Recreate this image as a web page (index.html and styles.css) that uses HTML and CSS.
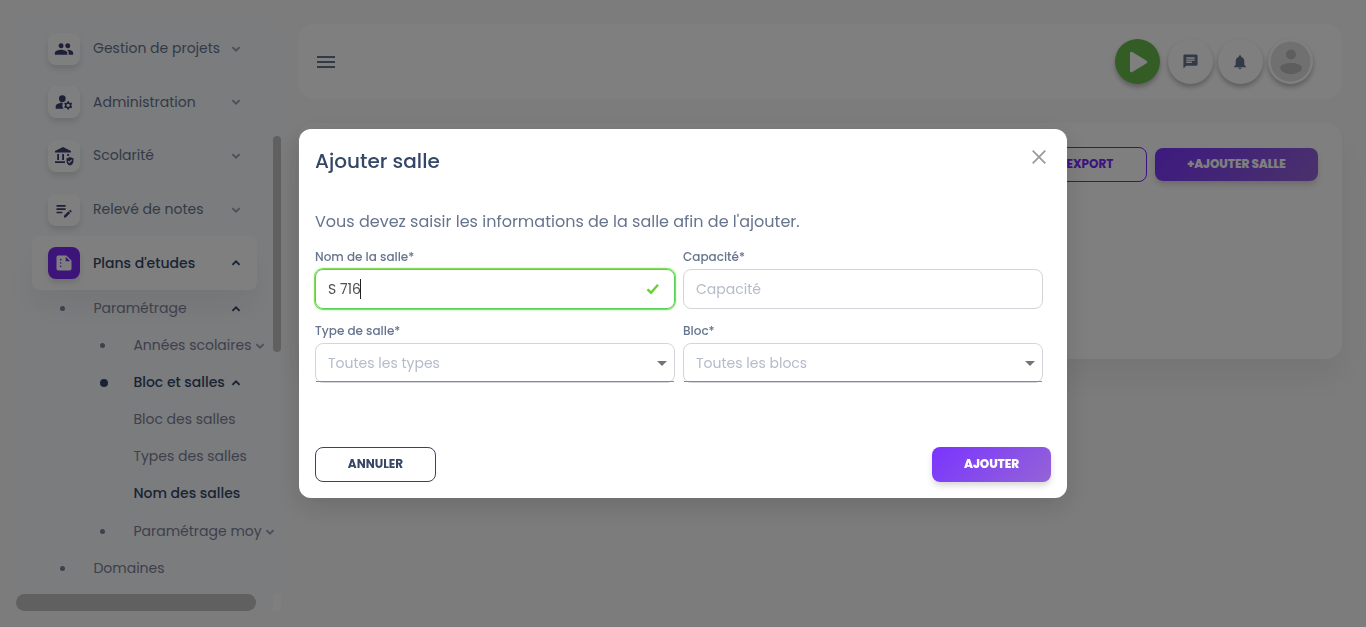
FILE: index.html
```
<!DOCTYPE html>
<html lang="fr">
<head>
<meta charset="utf-8">
<title>Ajouter salle</title>
<link rel="stylesheet" href="styles.css">
</head>
<body>
<svg class="defs" width="0" height="0">
  <symbol id="chev" viewBox="0 0 10 10"><path d="M1.4 3.1 5 6.7 8.6 3.1" fill="none" stroke="currentColor" stroke-width="1.9"/></symbol>
  <symbol id="caret" viewBox="0 0 10 5"><path d="M0 0h10L5 5z" fill="currentColor"/></symbol>
</svg>
<div class="page">
  <aside class="sidebar">
    <nav class="menu">
      <a class="item"><span class="tile"><svg width="20" height="20" viewBox="0 0 24 24"><path d="M16.5 11a3 3 0 1 0-.01-6 3 3 0 0 0 .01 6zm-8 0a3 3 0 1 0-.01-6 3 3 0 0 0 .01 6zm0 2C6 13 1 14.2 1 16.600V19h15v-2.400C16 14.200 11 13 8.500 13zm8 0-1 .06c1.300.9 2.200 2 2.200 3.540V19H23v-2.400c0-2.400-4-3.600-6.500-3.600z"/></svg></span><span class="label">Gestion de projets</span><svg class="arrow"><use href="#chev"/></svg></a>
      <a class="item"><span class="tile"><svg width="20" height="20" viewBox="0 0 24 24"><circle cx="10" cy="8" r="4"/><path d="M10.670 13.020C10.450 13.010 10.230 13 10 13c-2.420 0-4.680.67-6.610 1.820-.88.520-1.390 1.500-1.390 2.530V20h9.260a6.960 6.960 0 0 1-.59-6.980zM20.750 16c0-.22-.03-.42-.06-.63l1.140-1.010-1-1.730-1.450.49c-.32-.27-.68-.48-1.080-.63L18 11h-2l-.3 1.490c-.4.150-.76.360-1.080.63l-1.450-.49-1 1.730 1.140 1.010c-.03.210-.06.410-.06.63s.03.420.06.630l-1.140 1.010 1 1.730 1.450-.49c.32.270.68.480 1.080.63L16 21h2l.3-1.490c.4-.15.760-.36 1.080-.63l1.450.49 1-1.730-1.140-1.010c.03-.21.060-.41.060-.63zM17 18a2 2 0 1 1 0-4 2 2 0 0 1 0 4z"/></svg></span><span class="label">Administration</span><svg class="arrow"><use href="#chev"/></svg></a>
      <a class="item"><span class="tile"><svg width="20" height="20" viewBox="0 0 20 20"><path d="M9 1 1 5v1.500h16V5zM3.200 8h1.800v6H3.200zM8.200 8H10v6H8.200zM13.300 8h1.800v2h-1.800zM1 15.300h10v1.800H1z"/><path fill-rule="evenodd" d="M16 11l-3.500 1.400V15c0 2.200 1.500 4 3.500 4.600 2-.6 3.500-2.400 3.500-4.600v-2.600zm-.6 6.200-1.700-1.700.8-.8.900.9 2.100-2.100.8.8z"/></svg></span><span class="label">Scolarité</span><svg class="arrow"><use href="#chev"/></svg></a>
      <a class="item"><span class="tile"><svg width="20" height="20" viewBox="0 0 24 24"><path d="M3 10h11v2H3zM3 6h11v2H3zM3 14h7v2H3zM18.010 12.870l.71-.71a1 1 0 0 1 1.410 0l.71.71a1 1 0 0 1 0 1.410l-.71.710zM17.300 13.580l-5.300 5.300V21h2.120l5.300-5.300z"/></svg></span><span class="label">Relevé de notes</span><svg class="arrow"><use href="#chev"/></svg></a>
      <a class="item active"><span class="tile"><svg width="20" height="20" viewBox="0 0 24 24"><path fill-rule="evenodd" d="M15 3H5a2 2 0 0 0-2 2v14c0 1.100.9 2 2 2h14a2 2 0 0 0 2-2V9zM8 17a1 1 0 1 1 0-2 1 1 0 0 1 0 2zm0-4a1 1 0 1 1 0-2 1 1 0 0 1 0 2zm0-4a1 1 0 1 1 0-2 1 1 0 0 1 0 2zm6 1V4.500l5.500 5.500z"/></svg></span><span class="label">Plans d'etudes</span><svg class="arrow up"><use href="#chev"/></svg></a>
    </nav>
    <div class="sub">
      <a class="row"><i class="dot"></i><span class="label">Paramétrage</span><svg class="arrow up"><use href="#chev"/></svg></a>
      <a class="row deep"><i class="dot"></i><span class="label">Années scolaires</span><svg class="arrow near"><use href="#chev"/></svg></a>
      <a class="row deep on"><i class="dot"></i><span class="label">Bloc et salles</span><svg class="arrow up near wide"><use href="#chev"/></svg></a>
      <a class="row deep"><span class="label">Bloc des salles</span></a>
      <a class="row deep"><span class="label">Types des salles</span></a>
      <a class="row deep on"><span class="label">Nom des salles</span></a>
      <a class="row deep last"><i class="dot"></i><span class="label">Paramétrage moy</span><svg class="arrow near"><use href="#chev"/></svg></a>
      <a class="row"><i class="dot"></i><span class="label">Domaines</span></a>
    </div>
    <i class="bar-v"></i><i class="bar-h"></i><i class="bar-c"></i>
  </aside>
  <main class="main">
    <header class="card topbar">
      <span class="burger"><i></i><i></i><i></i></span>
      <div class="actions">
        <span class="round play"><svg width="45" height="45" viewBox="0 0 45 45"><path d="M16.500 14.300v17.400l14.300-8.700z" fill="#fff" stroke="#fff" stroke-width="3" stroke-linejoin="round"/></svg></span>
        <span class="round"><svg class="nudge" width="17" height="17" viewBox="0 0 24 24"><path d="M20 2H4a2 2 0 0 0-2 2v18l4-4h14a2 2 0 0 0 2-2V4a2 2 0 0 0-2-2zM6 9h12v2H6zm8 5H6v-2h8zm4-6H6V6h12z"/></svg></span>
        <span class="round"><svg class="nudge" width="16" height="16" viewBox="0 0 24 24"><path d="M12 23a2.200 2.200 0 0 0 2.200-2.200H9.800A2.200 2.200 0 0 0 12 23zm6.500-6.500V11c0-3.400-1.800-6.200-4.900-7V3.300a1.600 1.600 0 0 0-3.200 0V4c-3.100.8-4.900 3.600-4.900 7v5.500l-2.300 2v1.200h17.600v-1.200z"/></svg></span>
        <span class="round avatar"><svg width="41" height="41" viewBox="0 0 41 41"><circle cx="20.500" cy="20.500" r="20" fill="#e0e0e0"/><circle cx="21" cy="13.500" r="5" fill="#bdbdbd"/><path d="M10 27c0-3 5-5 11-5s11 2 11 5c-1 3.500-5 6-11 6s-10-2.500-11-6z" fill="#bdbdbd"/></svg></span>
      </div>
    </header>
    <section class="card content">
      <button class="btn export">EXPORT</button>
      <button class="btn grad add">+AJOUTER SALLE</button>
    </section>
  </main>
</div>
<div class="backdrop">
  <div class="modal">
    <div class="head"><h2>Ajouter salle</h2><svg class="close" width="14" height="14" viewBox="0 0 14 14"><path d="M.7.7l12.600 12.600M13.300.7.7 13.300"/></svg></div>
    <p class="intro">Vous devez saisir les informations de la salle afin de l'ajouter.</p>
    <div class="grid">
      <div class="field"><label>Nom de la salle*</label><div class="input valid"><span>S 716</span><i class="cursor"></i><svg class="check" width="14" height="12" viewBox="0 0 14 12"><path d="M1.500 6.300 5 9.700 12 1.700" fill="none" stroke="#66d432" stroke-width="2.500"/></svg></div></div>
      <div class="field"><label>Capacité*</label><div class="input">Capacité</div></div>
      <div class="field"><label>Type de salle*</label><div class="input select">Toutes les types<svg class="caret"><use href="#caret"/></svg></div></div>
      <div class="field"><label>Bloc*</label><div class="input select">Toutes les blocs<svg class="caret"><use href="#caret"/></svg></div></div>
    </div>
    <div class="foot"><button class="btn cancel">ANNULER</button><button class="btn grad ok">AJOUTER</button></div>
  </div>
</div>
</body>
</html>
```
FILE: styles.css
```
* { box-sizing: border-box; }
body { margin: 0; height: 627px; overflow: hidden; background: #f8f8f8; font-family: Poppins, Inter, "Open Sans", sans-serif; font-size: 14px; color: #67748e; }
h2, p { margin: 0; }
.defs { position: absolute; }
.page { display: flex; height: 627px; }

.sidebar { position: relative; flex: none; width: 265px; height: 595px; margin: 16px 17px 0 16px; padding-top: 5.900px; background: #f7f9fb; border-radius: 16px; }
.item { display: flex; align-items: center; width: 225px; height: 53.650px; margin-left: 16px; padding: 0 16px; border-radius: 8px; }
.item.active { background: #fff; box-shadow: 0 20px 27px rgba(0, 0, 0, .05); color: #344767; font-weight: 500; }
.tile { flex: none; display: flex; align-items: center; justify-content: center; width: 32px; height: 32px; margin-right: 13px; border-radius: 8px; background: #fff; box-shadow: 0 4px 6px rgba(0, 0, 0, .12); }
.tile svg { fill: #3a416f; }
.active .tile { background: #7928f5; }
.active .tile svg { fill: #fff; }
.label { white-space: nowrap; }
.arrow { flex: none; width: 10px; height: 10px; margin-left: auto; color: #9a9eb0; }
.arrow.up { transform: rotate(180deg); color: #344767; }
.row { display: flex; align-items: center; height: 37px; padding-left: 44px; }
.row.last { margin-top: 1px; }
.row .label { color: #7b809a; }
.row .dot { width: 5px; height: 5px; margin-right: 28.400px; border-radius: 50%; background: #7b809a; }
.row:not(.deep) .arrow { margin-right: 40.500px; }
.row.deep { padding-left: 84px; }
.row.deep .label:first-child { margin-left: 33.400px; }
.row.on .label { color: #344767; font-weight: 500; }
.row.on .dot { width: 8px; height: 8px; margin: 0 25.400px 0 0; background: #344767; }
.arrow.near { margin-left: 3.500px; }
.arrow.wide { margin-left: 6px; }
.bar-v, .bar-h, .bar-c { position: absolute; background: #c1c1c1; }
.bar-v { left: 257px; top: 120px; width: 8px; height: 216px; border-radius: 4px; }
.bar-h { left: 0; bottom: 0; width: 240px; height: 17px; border-radius: 9px; }
.bar-c { right: 0; bottom: 0; width: 8px; height: 17px; background: #fff; }

.main { flex: 1; padding: 24px 24px 0 0; }
.card { background: #fff; border-radius: 16px; }
.topbar { display: flex; align-items: center; justify-content: space-between; height: 75px; padding: 0 29px 0 19px; }
.burger { display: grid; gap: 3px; width: 18px; }
.burger i { height: 2px; background: #67748e; }
.actions { display: flex; gap: 5px; }
.round { display: flex; align-items: center; justify-content: center; width: 45px; height: 45px; border-radius: 50%; background: #fff; box-shadow: 0 3px 5px rgba(0, 0, 0, .28); }
.round svg { fill: #67748e; }
.nudge { margin-right: 1px; }
.round.play { margin-right: 3px; background: #66bb4a; }
.content { display: flex; justify-content: flex-end; align-items: flex-start; gap: 8px; height: 236px; margin-top: 24px; padding: 24px; box-shadow: 0 20px 27px rgba(0, 0, 0, .05); }

.btn { padding: 0 0 2px; border: 0; border-radius: 8px; font: 700 12px Poppins, Inter, sans-serif; text-align: center; }
.grad { color: #fff; background: linear-gradient(135deg, #7a34ff, #9464d6); box-shadow: 0 4px 7px -1px rgba(0, 0, 0, .18); font-weight: 800; letter-spacing: -.1px; }
.export { width: 114px; height: 35px; border: 1px solid #7928ff; background: #fff; color: #7928ff; }
.add { width: 163px; height: 33px; margin-top: 1px; }

.backdrop { position: fixed; inset: 0; padding: 129px 0 0 299px; background: rgba(0, 0, 0, .5); }
.modal { width: 768px; height: 369px; padding: 16px; border-radius: 12px; background: #fff; box-shadow: 0 8px 26px rgba(20, 20, 20, .15); }
.head { display: flex; justify-content: space-between; height: 60px; }
.head h2 { font-size: 20px; line-height: 32px; font-weight: 500; color: #344767; }
.close { margin: 5px 5px 0 0; fill: none; stroke: #999; stroke-width: 1.7; }
.intro { height: 44px; line-height: 34px; font-size: 16px; white-space: nowrap; }
.grid { display: grid; grid-template-columns: 360px 360px; column-gap: 8px; }
.field { height: 74px; }
label { display: block; height: 20px; line-height: 16px; font-size: 12px; font-weight: 500; }
.input { position: relative; display: flex; align-items: center; height: 40px; padding: 0 12px; border: 1px solid #d2d6da; border-radius: 8px; color: #b4bbc9; }
.input.valid { border-color: #56d356; color: #495057; box-shadow: 0 0 0 1px #66d432aa, 0 0 2px 1px #66d43288; }
.cursor { width: 1px; height: 20px; margin-left: -1px; background: #222; }
.check { margin-left: auto; margin-right: 2.500px; }
.select::after { content: ""; position: absolute; left: 0; right: 0; bottom: 0; height: 1px; background: #8a8a8a; }
.caret { width: 10px; height: 5px; margin-left: auto; margin-right: -5px; color: #757575; }
.foot { display: flex; justify-content: space-between; margin-top: 50px; }
.cancel { width: 121px; height: 35px; border: 1px solid #344767; background: #fff; color: #344767; }
.ok { width: 119px; height: 35px; }
```
